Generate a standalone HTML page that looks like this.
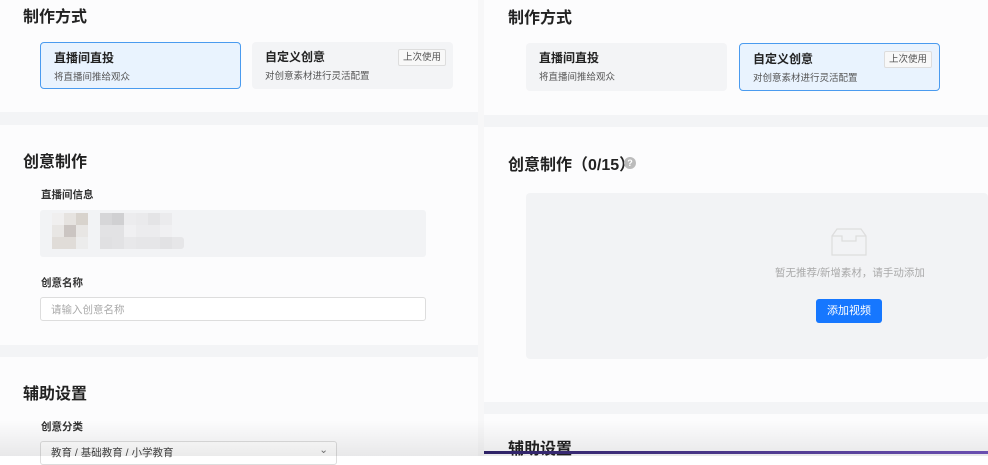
<!DOCTYPE html>
<html><head><meta charset="utf-8">
<style>
*{margin:0;padding:0;box-sizing:border-box}
body{width:988px;height:456px;overflow:hidden;background:#fff;font-family:"Liberation Sans","Noto Sans CJK SC",sans-serif;color:#222;position:relative}
.a{position:absolute}
.gap{background:#f3f4f6}
.card{background:#fcfcfd}
h2{position:absolute;font-size:16px;font-weight:700;color:#222;white-space:nowrap}
.opt{position:absolute;width:201px;height:47px;border-radius:4px;background:#f3f4f6}
.opt.sel{background:#e9f3fe;border:1px solid #4a9bef}
.opt b{position:absolute;left:13px;top:6px;font-size:12px;color:#222}
.opt span{position:absolute;left:13px;top:26px;font-size:9.5px;color:#555}
.tag{position:absolute;right:7px;top:7px;border:1px solid #ddd;background:#f8f8f8;border-radius:2px;font-size:9.5px;color:#555;padding:1px 4px;line-height:13px}
.lbl{position:absolute;font-size:10.5px;font-weight:700;color:#333}
.px{position:absolute;width:12px;height:12px}
</style></head><body>
<div class="a card" style="left:0;top:0;width:478px;height:112px"></div>
<div class="a gap" style="left:0;top:112px;width:478px;height:13px"></div>
<div class="a card" style="left:0;top:125px;width:478px;height:220px"></div>
<div class="a gap" style="left:0;top:345px;width:478px;height:12px"></div>
<div class="a card" style="left:0;top:357px;width:478px;height:99px"></div>
<div class="a" style="left:478px;top:0;width:6px;height:456px;background:#f7f7f8"></div>

<h2 style="left:23px;top:3px">制作方式</h2>
<div class="opt sel" style="left:40px;top:42px"><b>直播间直投</b><span>将直播间推给观众</span></div>
<div class="opt" style="left:252px;top:42px;height:47px"><b>自定义创意</b><span>对创意素材进行灵活配置</span><div class="tag">上次使用</div></div>

<h2 style="left:23px;top:148px">创意制作</h2>
<div class="lbl" style="left:41px;top:187px">直播间信息</div>
<div class="a" style="left:40px;top:210px;width:386px;height:47px;background:#f2f3f5;border-radius:3px"></div>
<div id="pix"></div>
<div class="lbl" style="left:41px;top:275px">创意名称</div>
<div class="a" style="left:40px;top:297px;width:386px;height:24px;border:1px solid #ddd;border-radius:3px;background:#fff;font-size:10.5px;color:#aaa;padding:4px 10px">请输入创意名称</div>

<h2 style="left:23px;top:380px">辅助设置</h2>
<div class="lbl" style="left:41px;top:419px">创意分类</div>
<div class="a" style="left:40px;top:441px;width:297px;height:24px;border:1px solid #ddd;border-radius:3px;background:#fff;font-size:10.5px;color:#444;padding:3px 10px">教育 / 基础教育 / 小学教育<span style="position:absolute;right:8px;top:2px;color:#777">⌄</span></div>

<div class="a card" style="left:484px;top:0;width:504px;height:115px"></div>
<div class="a gap" style="left:484px;top:115px;width:504px;height:12px"></div>
<div class="a card" style="left:484px;top:127px;width:504px;height:275px"></div>
<div class="a gap" style="left:484px;top:402px;width:504px;height:12px"></div>
<div class="a card" style="left:484px;top:414px;width:504px;height:42px"></div>

<h2 style="left:508px;top:4px">制作方式</h2>
<div class="opt" style="left:526px;top:43px;height:48px"><b>直播间直投</b><span>将直播间推给观众</span></div>
<div class="opt sel" style="left:739px;top:43px;height:48px"><b>自定义创意</b><span>对创意素材进行灵活配置</span><div class="tag">上次使用</div></div>

<h2 style="left:508px;top:151px">创意制作（0/15）</h2>
<div class="a" style="left:624px;top:157px;width:12px;height:12px;border-radius:50%;background:#bbb;color:#fff;font-size:9px;text-align:center;line-height:12px;font-weight:700">?</div>
<div class="a" style="left:526px;top:193px;width:462px;height:166px;background:#f2f3f5;border-radius:4px"></div>
<svg class="a" style="left:831px;top:228px" width="36" height="28" viewBox="0 0 36 28"><path d="M6 1H30L35 8V27H1V8Z M1 8H11V13H25V8H35" fill="none" stroke="#ddd" stroke-width="1.2"/></svg>
<div class="a" style="left:775px;top:265px;font-size:10.5px;color:#aaa">暂无推荐/新增素材，请手动添加</div>
<div class="a" style="left:816px;top:299px;width:66px;height:24px;background:#1677ff;border-radius:3px;color:#fff;font-size:11px;text-align:center;line-height:24px">添加视频</div>

<h2 style="left:508px;top:435px">辅助设置</h2>

<div class="a" style="left:0;top:420px;width:988px;height:36px;background:linear-gradient(to bottom,rgba(0,0,0,0),rgba(0,0,0,0.08))"></div>
<div class="a" style="left:484px;top:451px;width:504px;height:3px;background:linear-gradient(to right,#2e2266,#6a4fb0)"></div>

<div class="px" style="left:52px;top:213px;background:#f0efef"></div>
<div class="px" style="left:64px;top:213px;background:#e6e3e0"></div>
<div class="px" style="left:76px;top:213px;background:#d8d3cd"></div>
<div class="px" style="left:100px;top:213px;background:#d6d6d8"></div>
<div class="px" style="left:112px;top:213px;background:#d0d0d2"></div>
<div class="px" style="left:124px;top:213px;background:#ececee"></div>
<div class="px" style="left:136px;top:213px;background:#eaeaec"></div>
<div class="px" style="left:148px;top:213px;background:#e4e4e6"></div>
<div class="px" style="left:160px;top:213px;background:#ebebed"></div>
<div class="px" style="left:52px;top:225px;background:#e8e6e4"></div>
<div class="px" style="left:64px;top:225px;background:#cbc5c2"></div>
<div class="px" style="left:76px;top:225px;background:#e8e6e4"></div>
<div class="px" style="left:100px;top:225px;background:#e2e2e4"></div>
<div class="px" style="left:112px;top:225px;background:#e2e2e4"></div>
<div class="px" style="left:124px;top:225px;background:#f0f0f2"></div>
<div class="px" style="left:136px;top:225px;background:#ececee"></div>
<div class="px" style="left:148px;top:225px;background:#ececee"></div>
<div class="px" style="left:160px;top:225px;background:#f0f0f2"></div>
<div class="px" style="left:52px;top:237px;background:#e0dcd8"></div>
<div class="px" style="left:64px;top:237px;background:#e0dcd8"></div>
<div class="px" style="left:76px;top:237px;background:#ececec"></div>
<div class="px" style="left:100px;top:237px;background:#e0e0e2"></div>
<div class="px" style="left:112px;top:237px;background:#e2e2e4"></div>
<div class="px" style="left:124px;top:237px;background:#e8e8ea"></div>
<div class="px" style="left:136px;top:237px;background:#e6e6e8"></div>
<div class="px" style="left:148px;top:237px;background:#e6e6e8"></div>
<div class="px" style="left:160px;top:237px;background:#e2e2e4"></div>
<div class="px" style="left:172px;top:237px;background:#e6e6e8;border-radius:0 3px 3px 0"></div>
</body></html>
